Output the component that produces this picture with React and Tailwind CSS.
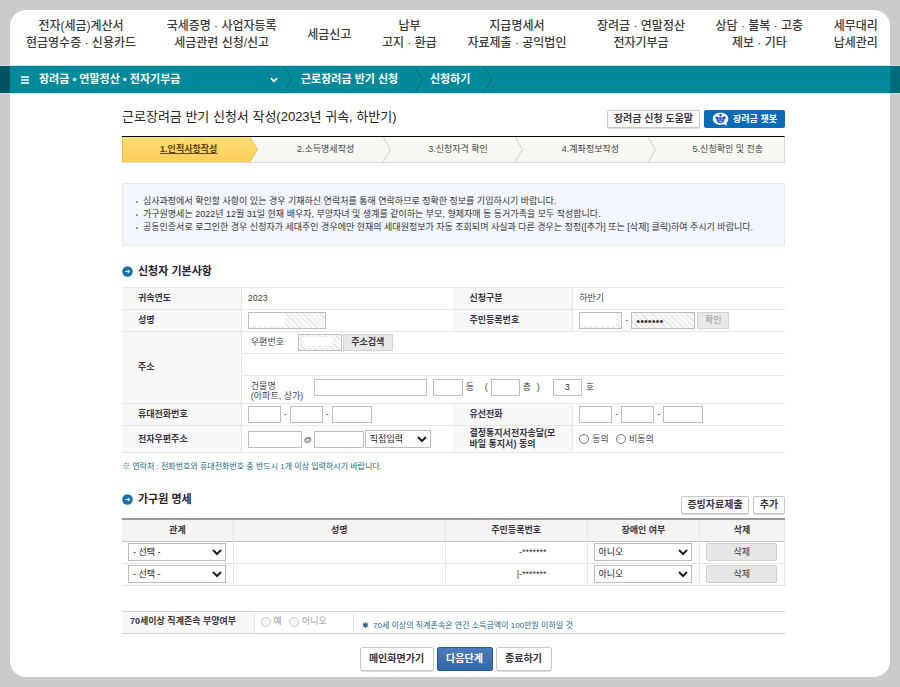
import React from "react";

const FONT =
  "font-['Liberation_Sans','Noto_Sans_CJK_KR',sans-serif]";

const HATCH =
  "[background:repeating-linear-gradient(45deg,#e6e6e6_0_1px,#f9f9f9_1px_4px)]";
const HATCH_LEFT_BLANK =
  "[background:linear-gradient(#fff,#fff)_0_0/36px_13px_no-repeat,repeating-linear-gradient(45deg,#e6e6e6_0_1px,#f9f9f9_1px_4px)]";
const HATCH_CENTER_BLANK =
  "[background:linear-gradient(#fff,#fff)_5px_2px/29px_9px_no-repeat,repeating-linear-gradient(45deg,#e6e6e6_0_1px,#f9f9f9_1px_4px)]";

const NAV = [
  ["전자(세금)계산서", "현금영수증 · 신용카드"],
  ["국세증명 · 사업자등록", "세금관련 신청/신고"],
  ["세금신고"],
  ["납부", "고지 · 환급"],
  ["지급명세서", "자료제출 · 공익법인"],
  ["장려금 · 연말정산", "전자기부금"],
  ["상담 · 불복 · 고충", "제보 · 기타"],
  ["세무대리", "납세관리"],
];

const NOTICES = [
  "심사과정에서 확인할 사항이 있는 경우 기재하신 연락처를 통해 연락하므로 정확한 정보를 기입하시기 바랍니다.",
  "가구원명세는 2022년 12월 31일 현재 배우자, 부양자녀 및 생계를 같이하는 부모, 형제자매 등 동거가족을 모두 작성합니다.",
  "공동인증서로 로그인한 경우 신청자가 세대주인 경우에만 현재의 세대원정보가 자동 조회되며 사실과 다른 경우는 정정([추가] 또는 [삭제] 클릭)하여 주시기 바랍니다.",
];

function TopNav() {
  return (
    <nav className="flex h-[56px] items-start justify-between pt-2 pr-3 pl-4">
      {NAV.map((lines) => (
        <a
          key={lines[0]}
          href="#"
          className="flex h-[34px] flex-col items-center justify-center text-[12px] leading-[17px] font-medium whitespace-nowrap text-[#3a3a3a]"
        >
          {lines.map((l) => (
            <span key={l}>{l}</span>
          ))}
        </a>
      ))}
    </nav>
  );
}

function CrumbArrow() {
  return (
    <svg viewBox="0 0 9 27" className="h-[27px] w-[9px] shrink-0" fill="none">
      <path d="M0.5 0.5 L8 13.5 L0.5 26.5" stroke="#046370" />
      <path d="M1.5 0.5 L9 13.5 L1.5 26.5" stroke="#2fa3af" strokeOpacity="0.5" />
    </svg>
  );
}

function Breadcrumb() {
  return (
    <div className="-mx-2.5 flex h-[27px] items-center border-x-[10px] border-r-[#006c79] border-l-[#005560] bg-[#008998] text-[11px] font-bold whitespace-nowrap text-white outline outline-[#bfe3e6]">
      <button type="button" className="flex w-[274px] items-center pr-[6px] pl-[11px]">
        <svg viewBox="0 0 8 8" className="h-2 w-2" stroke="#fff" strokeWidth="1.4">
          <path d="M0 1H8M0 4H8M0 7H8" />
        </svg>
        <span className="ml-2.5 flex-1 text-left">장려금 • 연말정산 • 전자기부금</span>
        <svg viewBox="0 0 8 6" className="h-1.5 w-2" fill="none" stroke="#fff" strokeWidth="1.7">
          <path d="M1 1.2 L4 4.4 L7 1.2" />
        </svg>
      </button>
      <CrumbArrow />
      <a href="#" className="w-[122px] pl-2">근로장려금 반기 신청</a>
      <CrumbArrow />
      <a href="#" className="w-[60px] pl-1.5">신청하기</a>
      <CrumbArrow />
    </div>
  );
}

function SmallButton({ children, className = "" }) {
  return (
    <button
      type="button"
      className={`rounded-[2px] border border-[#c8c8c8] bg-white text-[10px] leading-none font-bold whitespace-nowrap text-[#3b3340] shadow-[0_1px_0_#ddd] ${className}`}
    >
      {children}
    </button>
  );
}

function Step({ label, active, last }) {
  return (
    <li className={`flex flex-1 items-stretch ${active ? "" : "bg-[#f8f7f4]"}`}>
      <span
        className={`flex flex-1 items-center justify-center text-[9px] whitespace-nowrap ${
          active
            ? "border-l border-[#e9b93f] bg-gradient-to-b from-[#fddf74] to-[#fbcd5c] pl-1 font-bold text-[#5b4416] underline"
            : last
              ? "pl-5 text-[#444]"
              : "pl-3.5 text-[#444]"
        }`}
      >
        {label}
      </span>
      {!last && (
        <svg
          viewBox="0 0 8 26"
          preserveAspectRatio="none"
          className="z-10 -mr-1 w-2 shrink-0"
        >
          <path d="M0 0 L7.5 13 L0 26Z" fill={active ? "#fcd567" : "#f8f7f4"} />
          <path d="M0 0 L7.5 13 L0 26" fill="none" stroke={active ? "#eac45f" : "#cfcecb"} />
        </svg>
      )}
    </li>
  );
}

function SectionTitle({ children }) {
  return (
    <h2 className="flex items-center gap-[5px] text-[11px] leading-4 font-bold text-[#2b2230]">
      <svg viewBox="0 0 11 11" className="h-[11px] w-[11px]">
        <circle cx="5.5" cy="5.5" r="5.3" fill="#1b70ab" />
        <path d="M3.2 5.5H7.4M5.7 3.8L7.4 5.5L5.7 7.2" fill="none" stroke="#d9f1fb" strokeWidth="1.1" />
      </svg>
      {children}
    </h2>
  );
}

function Box({ label, className = "", ...rest }) {
  return (
    <input
      aria-label={label}
      className={`h-[17px] shrink-0 border border-[#bdbdbd] px-1 text-[9px] text-[#333] ${className}`}
      {...rest}
    />
  );
}

function Pick({ label, options, className = "" }) {
  return (
    <select
      aria-label={label}
      className={`h-[18px] border border-[#bdbdbd] bg-white text-[9px] text-[#222] ${className}`}
    >
      {options.map((o) => (
        <option key={o}>{o}</option>
      ))}
    </select>
  );
}

function Phone({ label }) {
  return (
    <div className="flex items-center">
      <Box label={`${label} 앞자리`} className="w-[33px]" />
      <span className="w-[9px] text-center">-</span>
      <Box label={`${label} 가운데`} className="w-[33px]" />
      <span className="w-[9px] text-center">-</span>
      <Box label={`${label} 끝자리`} className="w-[40px]" />
    </div>
  );
}

function Choice({ name, label, disabled }) {
  return (
    <label className="flex items-center gap-[3px]">
      <input type="radio" name={name} disabled={disabled} className="h-[10px] w-[10px]" />
      {label}
    </label>
  );
}

function Th({ children, ...rest }) {
  return (
    <th
      scope="row"
      className="border-y border-r border-[#e6e6e6] bg-[#f8f8f8] py-0 pr-1 pl-4 text-left text-[9px] leading-[11px] font-bold text-[#3b3340]"
      {...rest}
    >
      {children}
    </th>
  );
}

function Td({ children, className = "", ...rest }) {
  return (
    <td className={`border-y border-[#e6e6e6] py-0 pl-1.5 ${className}`} {...rest}>
      {children}
    </td>
  );
}

function ApplicantTable() {
  return (
    <table className="mt-2 w-full table-fixed border-collapse border-y border-[#cfcfcf] text-[9px] leading-[11px] text-[#444]">
      <colgroup>
        <col className="w-[18%]" />
        <col className="w-[32%]" />
        <col className="w-[18%]" />
        <col className="w-[32%]" />
      </colgroup>
      <tbody>
        <tr className="h-[22px]">
          <Th>귀속연도</Th>
          <Td>2023</Td>
          <Th>신청구분</Th>
          <Td>하반기</Td>
        </tr>
        <tr className="h-[22px]">
          <Th>성명</Th>
          <Td>
            <Box label="성명" readOnly className={`block w-[78px] ${HATCH_LEFT_BLANK}`} />
          </Td>
          <Th>주민등록번호</Th>
          <Td>
            <div className="flex items-center">
              <Box label="주민등록번호 앞자리" readOnly className={`w-[43px] ${HATCH_LEFT_BLANK}`} />
              <span className="w-[9px] text-center">-</span>
              <input
                aria-label="주민등록번호 뒷자리"
                type="password"
                readOnly
                defaultValue="0000000"
                className={`h-[17px] w-[64px] border border-[#bdbdbd] px-1 text-[11px] text-[#333] ${HATCH}`}
              />
              <button
                type="button"
                disabled
                className="ml-0.5 h-[17px] w-8 border border-[#d3d3d3] bg-[#e9e7e7] text-[9px] leading-none text-[#999]"
              >
                확인
              </button>
            </div>
          </Td>
        </tr>
        <tr className="h-[22px]">
          <Th rowSpan={3}>주소</Th>
          <Td colSpan={3}>
            <div className="flex items-center pl-[3px]">
              <label htmlFor="zip" className="w-[47px]">우편번호</label>
              <Box id="zip" label="우편번호" readOnly className={`w-[44px] ${HATCH_CENTER_BLANK}`} />
              <button
                type="button"
                className="ml-px h-[17px] w-[50px] border border-[#d3d3d3] bg-[#e9e7e7] text-[9px] leading-none font-bold whitespace-nowrap text-[#3b3340]"
              >
                주소검색
              </button>
            </div>
          </Td>
        </tr>
        <tr className="h-[22px]">
          <Td colSpan={3} />
        </tr>
        <tr className="h-[28px]">
          <Td colSpan={3}>
            <div className="flex items-start pl-[3px]">
              <label htmlFor="bldg" className="mt-0.5 w-[63px] text-[9px] leading-[10px]">
                건물명
                <br />
                (아파트, 상가)
              </label>
              <Box id="bldg" label="건물명" className="w-[113px]" />
              <div className="ml-1.5 flex items-center">
                <Box label="동" className="w-[30px]" />
                <span className="ml-[3px] w-[19px]">동</span>
                <span className="w-1.5">(</span>
                <Box label="층" className="w-[29px]" />
                <span className="ml-[3px] w-[14px]">층</span>
                <span className="w-4">)</span>
                <Box label="호" defaultValue="3" className="w-[29px] text-center" />
                <span className="ml-1">호</span>
              </div>
            </div>
          </Td>
        </tr>
        <tr className="h-[22px]">
          <Th>휴대전화번호</Th>
          <Td>
            <Phone label="휴대전화번호" />
          </Td>
          <Th>유선전화</Th>
          <Td>
            <Phone label="유선전화" />
          </Td>
        </tr>
        <tr className="h-[27px]">
          <Th>전자우편주소</Th>
          <Td>
            <div className="flex items-center">
              <Box label="전자우편 아이디" className="w-[54px]" />
              <span className="w-3 text-center text-[8px]">@</span>
              <Box label="전자우편 도메인" className="w-[50px]" />
              <Pick label="도메인 선택" options={["직접입력"]} className="ml-px w-[66px]" />
            </div>
          </Td>
          <Th>
            결정통지서전자송달(모
            <br />
            바일 통지서) 동의
          </Th>
          <Td>
            <div className="flex items-center gap-[7px]">
              <Choice name="agree" label="동의" />
              <Choice name="agree" label="비동의" />
            </div>
          </Td>
        </tr>
      </tbody>
    </table>
  );
}

function FamilyTable() {
  const cell = "border-x border-b border-[#e4e4e4] px-1.5 py-0 first:border-l-0";
  return (
    <table className="mt-1 w-full table-fixed border-collapse border-t-2 border-[#999] text-[9px] leading-[11px] text-[#333]">
      <colgroup>
        <col className="w-[16.8%]" />
        <col className="w-[32%]" />
        <col className="w-[21.4%]" />
        <col className="w-[17%]" />
        <col className="w-[12.8%]" />
      </colgroup>
      <thead>
        <tr className="h-[22px] border-b border-[#c4c4c4] bg-[#f5f4f2] text-[#3b3340]">
          {["관계", "성명", "주민등록번호", "장애인 여부", "삭제"].map((h) => (
            <th key={h} scope="col" className="border-x border-[#e4e4e4] p-0 font-bold first:border-l-0">
              {h}
            </th>
          ))}
        </tr>
      </thead>
      <tbody>
        {["-*******", "|-*******"].map((id) => (
          <tr key={id} className="h-[22px]">
            <td className={cell}>
              <Pick label="관계" options={["- 선택 -"]} className="block w-[98px]" />
            </td>
            <td className={cell} />
            <td className={`${cell} text-right`}>
              <span className="pr-[34px]">{id}</span>
            </td>
            <td className={cell}>
              <Pick label="장애인 여부" options={["아니오"]} className="block w-[98px]" />
            </td>
            <td className={cell}>
              <button
                type="button"
                className="block h-[18px] w-[71px] rounded-[2px] border border-[#cfcfcf] bg-[#e8e6e6] text-[9px] leading-none text-[#333]"
              >
                삭제
              </button>
            </td>
          </tr>
        ))}
      </tbody>
    </table>
  );
}

function ChatIcon() {
  return (
    <svg viewBox="0 0 17 15" className="h-[15px] w-[17px]">
      <path d="M8.5 0.8C13 0.8 16.3 3.2 16.3 6.8C16.3 9 15.3 10.6 14.4 11.3L14.8 13.8L12 12.3C7 13.8 0.8 11.8 0.8 6.8C0.8 3.2 4 0.8 8.5 0.8Z" fill="#fff" />
      <path d="M3.3 5.2C4.5 4 5.6 4.4 6 5.2H11C11.6 4.2 12.8 4 13.8 5.2C13.4 7 12.8 7 12.6 7.2C12.2 10 10.5 11.3 8.5 11.3C6.4 11.3 4.7 10 4.4 7.2C3.8 7 3.5 6.4 3.3 5.2Z" fill="#2d55d6" />
      <path d="M8.5 2V4.6M6.8 3.2H10.2" stroke="#2d55d6" strokeWidth="1.2" />
      <path d="M6.2 7.2H7.6M9.4 7.2H10.8M7 9.3H10" stroke="#cfe3ff" strokeWidth="1" />
    </svg>
  );
}

export default function App() {
  return (
    <div className={`min-h-screen bg-[#cbcbcb] p-2.5 ${FONT}`}>
      <div className="rounded-2xl bg-white">
        <TopNav />
        <Breadcrumb />
        <main className="pt-[17px] pr-[105px] pb-1.5 pl-[112px]">
          <div className="flex items-start justify-between">
            <h1 className="text-[13px] leading-[13px] whitespace-nowrap text-[#222]">
              근로장려금 반기 신청서 작성(2023년 귀속, 하반기)
            </h1>
            <div className="flex gap-1">
              <SmallButton className="h-[18px] w-[93px]">장려금 신청 도움말</SmallButton>
              <button
                type="button"
                className="flex h-[18px] w-[81px] items-center justify-center gap-1 rounded-[2px] bg-[#0a6cb8] text-[9px] leading-none font-bold whitespace-nowrap text-white"
              >
                <ChatIcon />
                장려금 챗봇
              </button>
            </div>
          </div>

          <ol className="mt-2 flex h-[27px] border-t border-r border-b border-t-black border-r-[#dcdad5] border-b-[#dcdad5]">
            <Step label="1.인적사항작성" active />
            <Step label="2.소득명세작성" />
            <Step label="3.신청자격 확인" />
            <Step label="4.계좌정보작성" />
            <Step label="5.신청확인 및 전송" last />
          </ol>

          <ul className="mt-5 h-[63px] border border-[#e3e8f1] bg-[#f3f6fd] pt-[11px] pl-[13px] text-[9px] leading-[13px] text-[#333]">
            {NOTICES.map((n) => (
              <li key={n} className="flex items-center gap-[5px] whitespace-nowrap">
                <span className="h-0.5 w-0.5 bg-[#9a9a9a]" />
                {n}
              </li>
            ))}
          </ul>

          <div className="mt-[17px]">
            <SectionTitle>신청자 기본사항</SectionTitle>
          </div>
          <ApplicantTable />
          <p className="mt-2 text-[8px] leading-[11px] text-[#27667a]">
            ※ 연락처 : 전화번호와 휴대전화번호 중 반드시 1개 이상 입력하시기 바랍니다.
          </p>

          <div className="mt-[19px] flex items-start justify-between">
            <SectionTitle>가구원 명세</SectionTitle>
            <div className="mt-[5px] flex gap-1">
              <SmallButton className="h-[18px] w-[68px]">증빙자료제출</SmallButton>
              <SmallButton className="h-[18px] w-8">추가</SmallButton>
            </div>
          </div>
          <FamilyTable />

          <div className="mt-[25px] flex h-[23px] items-stretch border-y border-[#cfcfcf] text-[9px] text-[#999]">
            <div className="flex w-[20%] items-center border-r border-[#e6e6e6] bg-[#f8f8f8] pl-2 font-bold whitespace-nowrap text-[#3b3340]">
              70세이상 직계존속 부양여부
            </div>
            <div className="flex w-[15%] items-center gap-[7px] border-r border-[#e6e6e6] pl-1.5">
              <Choice name="elder" label="예" disabled />
              <Choice name="elder" label="아니오" disabled />
            </div>
            <p className="flex items-center gap-1 pt-1.5 pl-2 text-[8px] leading-[11px] whitespace-nowrap text-[#27667a]">
              <span>✱</span>
              70세 이상의 직계존속은 연간 소득금액이 100만원 이하일 것
            </p>
          </div>

          <div className="mt-[13px] flex justify-center gap-[3px] pl-1">
            <SmallButton className="h-6 w-[74px]">메인화면가기</SmallButton>
            <button
              type="button"
              className="h-6 w-[56px] rounded-[2px] border border-[#2c5a96] bg-gradient-to-b from-[#4a7cbd] to-[#3566a6] text-[10px] leading-none font-bold whitespace-nowrap text-white"
            >
              다음단계
            </button>
            <SmallButton className="h-6 w-[56px]">종료하기</SmallButton>
          </div>
        </main>
      </div>
    </div>
  );
}
